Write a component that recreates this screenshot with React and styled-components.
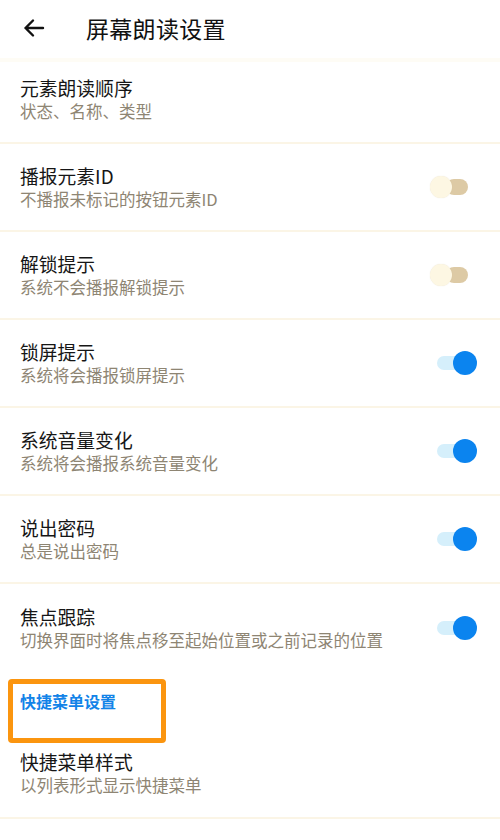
import React, { useState } from 'react';
import styled, { createGlobalStyle } from 'styled-components';

const GlobalStyle = createGlobalStyle`
  html, body {
    margin: 0;
    padding: 0;
    background: #fff;
  }
  body {
    font-family: "Noto Sans CJK SC", "Noto Sans", sans-serif;
  }
`;

const Page = styled.div`
  width: 500px;
  min-height: 840px;
  background: #fff;
  overflow: hidden;
`;

const Header = styled.header`
  height: 58px;
  display: flex;
  align-items: center;
  padding-left: 20px;
  border-bottom: 4px solid #fefcf5;
`;

const BackButton = styled.button`
  width: 28px;
  height: 28px;
  padding: 0;
  border: none;
  background: none;
  display: flex;
  align-items: center;
  justify-content: center;
  margin-right: 38px;
  margin-top: -2px;
`;

const Title = styled.h1`
  margin: 0;
  font-size: 23px;
  font-weight: 400;
  color: #111;
  letter-spacing: 0.3px;
  margin-top: -2px;
`;

const Row = styled.div`
  height: ${(p) => p.$h || 88}px;
  box-sizing: border-box;
  display: flex;
  align-items: center;
  padding: 0 23px 0 20px;
  border-bottom: ${(p) => (p.$line ? '2px solid #fbf5e6' : 'none')};
`;

const Texts = styled.div`
  flex: 1;
  display: flex;
  flex-direction: column;
  margin-top: ${(p) => p.$shift || 0}px;
`;

const Label = styled.div`
  font-size: 18.8px;
  line-height: 25px;
  color: #161616;
`;

const Sub = styled.div`
  font-size: 16.5px;
  line-height: 23px;
  color: #8e8573;
`;

const SectionBox = styled.div`
  height: 59px;
  display: flex;
  align-items: flex-start;
  padding-left: 8px;
`;

const Highlight = styled.div`
  width: 158px;
  height: 64px;
  box-sizing: border-box;
  margin-top: 7px;
  border: 5px solid #fb950f;
  border-radius: 4px;
  padding: 6px 0 0 7px;
`;

const SectionTitle = styled.div`
  font-size: 16px;
  font-weight: 700;
  color: #1283e8;
  line-height: 22px;
`;

const Switch = styled.button`
  position: relative;
  width: 48px;
  height: 26px;
  padding: 0;
  border: none;
  background: none;
  flex-shrink: 0;
`;

const Track = styled.span`
  position: absolute;
  top: ${(p) => (p.$on ? 6 : 5)}px;
  left: ${(p) => (p.$on ? 8 : 17)}px;
  width: ${(p) => (p.$on ? 24 : 22)}px;
  height: ${(p) => (p.$on ? 14 : 16)}px;
  border-radius: 8px;
  background: ${(p) => (p.$on ? '#d5effb' : '#ddcaa5')};
`;

const Knob = styled.span`
  position: absolute;
  top: ${(p) => (p.$on ? 1 : 2)}px;
  left: ${(p) => (p.$on ? 24 : 1)}px;
  width: ${(p) => (p.$on ? 24 : 22)}px;
  height: ${(p) => (p.$on ? 24 : 22)}px;
  border-radius: 50%;
  background: ${(p) => (p.$on ? '#0b84ef' : '#fdf7e3')};
  box-shadow: ${(p) => (p.$on ? 'none' : '0 0 1px rgba(200,180,140,0.4)')};
`;

const Toggle = ({ on, onClick }) => (
  <Switch onClick={onClick} aria-pressed={on}>
    <Track $on={on} />
    <Knob $on={on} />
  </Switch>
);

const BackIcon = () => (
  <svg width="24" height="24" viewBox="0 0 24 24" fill="none">
    <path
      d="M21 12H3.5M11 4.5L3.5 12L11 19.5"
      stroke="#111"
      strokeWidth="2.4"
      strokeLinecap="round"
      strokeLinejoin="round"
    />
  </svg>
);

const initial = [
  { key: 'id', label: '播报元素ID', sub: '不播报未标记的按钮元素ID', on: false },
  { key: 'unlock', label: '解锁提示', sub: '系统不会播报解锁提示', on: false },
  { key: 'lock', label: '锁屏提示', sub: '系统将会播报锁屏提示', on: true },
  { key: 'volume', label: '系统音量变化', sub: '系统将会播报系统音量变化', on: true },
  { key: 'pwd', label: '说出密码', sub: '总是说出密码', on: true },
  { key: 'focus', label: '焦点跟踪', sub: '切换界面时将焦点移至起始位置或之前记录的位置', on: true },
];

export default function App() {
  const [items, setItems] = useState(initial);

  const flip = (key) =>
    setItems((prev) => prev.map((it) => (it.key === key ? { ...it, on: !it.on } : it)));

  return (
    <Page>
      <GlobalStyle />
      <Header>
        <BackButton>
          <BackIcon />
        </BackButton>
        <Title>屏幕朗读设置</Title>
      </Header>

      <Row $h={82} $line>
        <Texts $shift={-6}>
          <Label>元素朗读顺序</Label>
          <Sub>状态、名称、类型</Sub>
        </Texts>
      </Row>

      {items.map((it, i) => (
        <Row key={it.key} $line={i < items.length - 1}>
          <Texts>
            <Label>{it.label}</Label>
            <Sub>{it.sub}</Sub>
          </Texts>
          <Toggle on={it.on} onClick={() => flip(it.key)} />
        </Row>
      ))}

      <SectionBox>
        <Highlight>
          <SectionTitle>快捷菜单设置</SectionTitle>
        </Highlight>
      </SectionBox>

      <Row $line>
        <Texts $shift={-2}>
          <Label>快捷菜单样式</Label>
          <Sub>以列表形式显示快捷菜单</Sub>
        </Texts>
      </Row>
    </Page>
  );
}
